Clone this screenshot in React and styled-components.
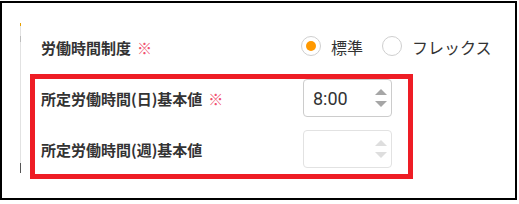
import React from "react";
import styled, { createGlobalStyle } from "styled-components";

const Global = createGlobalStyle`
  html, body { margin: 0; padding: 0; background: #fff; }
  body { font-family: "Noto Sans CJK JP", "Noto Sans", sans-serif; }
`;

const Frame = styled.div`
  position: relative;
  box-sizing: border-box;
  margin-top: 1px;
  width: 517px;
  height: 199px;
  border: 2px solid #000;
  display: flex;
  background: #fff;
`;

const Rail = styled.div`
  margin: 20px 0 0 18px;
  width: 1px;
  height: 150px;
  background: linear-gradient(
    to bottom,
    #e8a000 0px, #e8a000 3px,
    #e2e2e2 3px, #e2e2e2 13px,
    #bdbdbd 13px, #bdbdbd 19px,
    #e2e2e2 19px, #e2e2e2 140px,
    #555 140px, #555 150px
  );
`;

const Content = styled.div`
  display: flex;
  flex-direction: column;
  padding: 19px 0 0 20px;
`;

const Row = styled.div`
  display: grid;
  grid-template-columns: 262px auto;
  align-items: center;
  height: ${(p) => p.$h}px;
`;

const Label = styled.div`
  font-size: 15px;
  font-weight: 700;
  color: #333;
  display: flex;
  align-items: center;
  white-space: nowrap;
`;

const Req = styled.span`
  color: #f0506e;
  font-weight: 400;
  font-size: 15px;
  margin-left: 6px;
`;

const RadioGroup = styled.div`
  display: flex;
  align-items: center;
  gap: 19px;
  margin-left: -2px;
`;

const RadioItem = styled.label`
  display: flex;
  align-items: center;
  gap: 10px;
  font-size: 16px;
  color: #333;
`;

const Circle = styled.span`
  box-sizing: border-box;
  width: 20px;
  height: 20px;
  border-radius: 50%;
  border: 1px solid #cfcfcf;
  display: flex;
  align-items: center;
  justify-content: center;
  margin-top: -3px;
  &::after {
    content: "";
    width: 10px;
    height: 10px;
    border-radius: 50%;
    background: ${(p) => (p.$checked ? "#ff9900" : "transparent")};
  }
`;

const NumBox = styled.div`
  box-sizing: border-box;
  width: 89px;
  height: 38px;
  border: 1px solid ${(p) => (p.$disabled ? "#e2e2e2" : "#cccccc")};
  border-radius: 4px;
  display: flex;
  align-items: center;
  padding: 0 4px 0 9px;
  background: #fff;
`;

const NumText = styled.span`
  flex: 1;
  font-family: Roboto, "Liberation Sans", sans-serif;
  font-size: 18px;
  color: #333;
`;

const Spinner = ({ color }) => (
  <svg width="12" height="18" viewBox="0 0 12 18">
    <polygon points="6,0 12,6 0,6" fill={color} />
    <polygon points="0,12 12,12 6,18" fill={color} />
  </svg>
);

const Highlight = styled.div`
  position: absolute;
  left: 28px;
  top: 71px;
  width: 383px;
  height: 105px;
  box-sizing: border-box;
  border: 5px solid #ee1d25;
  pointer-events: none;
`;

export default function App() {
  return (
    <>
      <Global />
      <Frame>
        <Rail />
        <Content>
          <Row $h={50}>
            <Label>
              労働時間制度<Req>※</Req>
            </Label>
            <RadioGroup>
              <RadioItem>
                <Circle $checked />
                標準
              </RadioItem>
              <RadioItem>
                <Circle />
                フレックス
              </RadioItem>
            </RadioGroup>
          </Row>
          <Row $h={52}>
            <Label>
              所定労働時間(日)基本値<Req>※</Req>
            </Label>
            <NumBox>
              <NumText>8:00</NumText>
              <Spinner color="#a6a6a6" />
            </NumBox>
          </Row>
          <Row $h={50}>
            <Label>所定労働時間(週)基本値</Label>
            <NumBox $disabled>
              <NumText></NumText>
              <Spinner color="#dedede" />
            </NumBox>
          </Row>
        </Content>
        <Highlight />
      </Frame>
    </>
  );
}
